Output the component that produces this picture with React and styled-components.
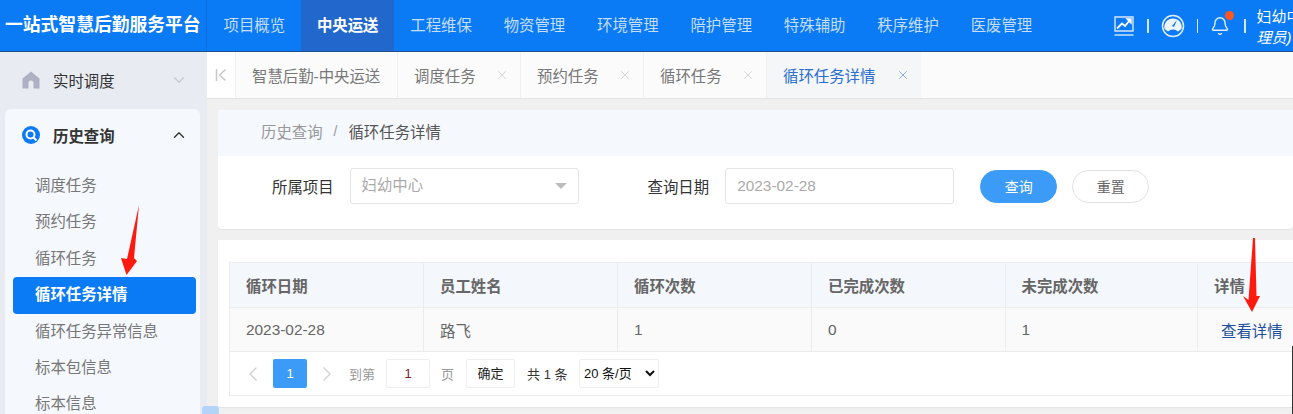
import React from 'react';
import styled, { createGlobalStyle } from 'styled-components';
import { Bell, ChevronDown, ChevronUp, ChevronLeft, ChevronRight, X } from 'lucide-react';

const GlobalStyle = createGlobalStyle`
	html, body {
		margin: 0;
		padding: 0;
		overflow: hidden;
	}
	* {
		box-sizing: border-box;
	}
	body {
		font-family: 'Liberation Sans', 'Noto Sans CJK SC', sans-serif;
	}
`;

const App = () => {
	const navArr = ['项目概览', '中央运送', '工程维保', '物资管理', '环境管理', '陪护管理', '特殊辅助', '秩序维护', '医废管理'];
	const subArr = ['调度任务', '预约任务', '循环任务', '循环任务详情', '循环任务异常信息', '标本包信息', '标本信息'];
	const tabArr = [
		{ name: '调度任务', width: 123 },
		{ name: '预约任务', width: 123 },
		{ name: '循环任务', width: 123 },
		{ name: '循环任务详情', width: 154, active: true },
	];
	const headArr = ['循环日期', '员工姓名', '循环次数', '已完成次数', '未完成次数', '详情'];
	const rowArr = ['2023-02-28', '路飞', '1', '0', '1'];

	return (
		<Page>
			<GlobalStyle />
			<Header>
				<Logo>一站式智慧后勤服务平台</Logo>
				<Nav>
					{navArr.map((el, idx) => (
						<NavItem key={idx} $active={el === '中央运送'}>{el}</NavItem>
					))}
				</Nav>
				<HeaderRight>
					<svg width="22" height="24" viewBox="0 0 22 24" fill="none" stroke="#d6e8ff" strokeWidth="1.4">
						<path d="M2 3v14h18V3z" />
						<path d="M1.5 21h19" />
						<path d="M4 14.5l5-5 3 2.5 5-6" stroke="#fff" strokeWidth="1.8" />
						<path d="M14 5h4v4z" fill="#fff" stroke="#fff" />
					</svg>
					<Divider />
					<svg width="24" height="24" viewBox="0 0 24 24">
						<circle cx="12" cy="12" r="10.5" fill="none" stroke="#e3efff" strokeWidth="1.5" />
						<path d="M3.5 15a8.8 8.8 0 0 1 0-4 8.800 8.800 0 0 1 17 0 8.800 8.800 0 0 1 0 4l-3.500 2.500a7 7 0 0 0-10 0z" fill="#eef5ff" />
						<path d="M11 12l5-6-3 7z" fill="#0a7af5" />
					</svg>
					<Divider />
					<BellWrap>
						<Bell size={20} color="#e3efff" strokeWidth={1.7} />
						<BellDot />
					</BellWrap>
					<Divider />
					<UserName>
						<span>妇幼中心</span>
						<em>理员)</em>
					</UserName>
				</HeaderRight>
			</Header>
			<Body>
				<Sidebar>
					<MenuRow $height={56}>
						<svg width="20" height="20" viewBox="0 0 20 20">
							<path d="M10 1.500L1.500 8.500V18.500H7.500V13a2.500 2.500 0 0 1 5 0v5.500h6V8.500z" fill="#aeb1c2" />
						</svg>
						<MenuTitle>实时调度</MenuTitle>
						<ChevronDown size={18} color="#c5c8d4" strokeWidth={1.5} />
					</MenuRow>
					<MenuCard>
						<MenuRow $height={52}>
							<svg width="20" height="20" viewBox="0 0 20 20">
								<circle cx="10" cy="10" r="9" fill="#0a7af5" />
								<circle cx="9.500" cy="9.500" r="4" fill="none" stroke="#fff" strokeWidth="2" />
								<path d="M12.500 12.500l3 3" stroke="#fff" strokeWidth="2" />
							</svg>
							<MenuTitle $bold>历史查询</MenuTitle>
							<ChevronUp size={18} color="#333" strokeWidth={1.8} />
						</MenuRow>
						<SubList>
							{subArr.map((el, idx) => (
								<SubItem key={idx} $active={el === '循环任务详情'}>{el}</SubItem>
							))}
						</SubList>
					</MenuCard>
				</Sidebar>
				<Main>
					<TabBar>
						<TabToggle>
							<svg width="12" height="14" viewBox="0 0 12 14" fill="none" stroke="#c8c8c8" strokeWidth="1.500">
								<path d="M1.500 1v12M10.500 1.500L4.500 7l6 5.500" />
							</svg>
						</TabToggle>
						<Tab $width={162}>智慧后勤-中央运送</Tab>
						{tabArr.map((el, idx) => (
							<Tab key={idx} $width={el.width} $active={el.active}>
								{el.name}
								<X size={14} strokeWidth={1.2} />
							</Tab>
						))}
					</TabBar>
					<Content>
						<Breadcrumb>
							<span>历史查询</span>
							<Slash>/</Slash>
							<strong>循环任务详情</strong>
						</Breadcrumb>
						<FilterPanel>
							<FilterLabel>所属项目</FilterLabel>
							<FilterBox>
								妇幼中心
								<Caret />
							</FilterBox>
							<FilterLabel $gap={69}>查询日期</FilterLabel>
							<FilterBox>2023-02-28</FilterBox>
							<PillButton $primary>查询</PillButton>
							<PillButton>重置</PillButton>
						</FilterPanel>
						<TableCard>
							<TableWrap>
								<TableRow $head>
									{headArr.map((el, idx) => (
										<Cell key={idx}>{el}</Cell>
									))}
								</TableRow>
								<TableRow>
									{rowArr.map((el, idx) => (
										<Cell key={idx}>{el}</Cell>
									))}
									<Cell $center><DetailLink>查看详情</DetailLink></Cell>
								</TableRow>
								<Pager>
									<PagerArrow><ChevronLeft size={24} strokeWidth={1.3} /></PagerArrow>
									<PageNum>1</PageNum>
									<PagerArrow><ChevronRight size={24} strokeWidth={1.3} /></PagerArrow>
									<PagerText $left={2} $right={11}>到第</PagerText>
									<PageInput>1</PageInput>
									<PagerText $left={11} $right={12}>页</PagerText>
									<ConfirmButton>确定</ConfirmButton>
									<PagerTotal>共 1 条</PagerTotal>
									<PageSelect defaultValue="20">
										<option value="20">20 条/页</option>
									</PageSelect>
								</Pager>
							</TableWrap>
						</TableCard>
					</Content>
				</Main>
			</Body>
			<Arrow $left={116} $top={203} width="28" height="74" viewBox="0 0 28 74">
				<path d="M23 2L18 55 21 58 10.500 72 5 55 11 56z" fill="#ff1a10" />
			</Arrow>
			<Arrow $left={1240} $top={236} width="24" height="78" viewBox="0 0 24 78">
				<path d="M13 2h2L16.500 60 20 60 12 76 3 60 8.500 64z" fill="#ff1a10" />
			</Arrow>
			<ScrollThumb />
			<EdgeLine />
		</Page>
	);
};

export default App;

const Page = styled.div`
	position: relative;
	width: 1293px;
	height: 414px;
	overflow: hidden;
	background: #f0f0f0;
`;
const Header = styled.header`
	height: 52px;
	display: flex;
	align-items: stretch;
	background: #0a7af5;
	border-bottom: 1px solid #1d4f8c;
	color: #fff;
`;
const Logo = styled.div`
	width: 207px;
	flex-shrink: 0;
	padding-left: 5px;
	line-height: 51px;
	font-size: 17.8px;
	font-weight: 700;
	white-space: nowrap;
	border-right: 1px solid #0a6fe0;
`;
const Nav = styled.nav`
	display: flex;
	margin-left: 0.6px;
`;
const NavItem = styled.div`
	width: 93.4px;
	text-align: center;
	line-height: 51px;
	font-size: 15.4px;
	white-space: nowrap;
	color: ${(p) => (p.$active ? '#fff' : '#c4defc')};
	font-weight: ${(p) => (p.$active ? 700 : 400)};
	background: ${(p) => (p.$active ? '#2268cc' : 'transparent')};
`;
const HeaderRight = styled.div`
	position: absolute;
	left: 1113px;
	top: 0;
	height: 51px;
	display: flex;
	align-items: center;
	gap: 12px;
`;
const Divider = styled.i`
	width: 1.5px;
	height: 14px;
	background: #d6e8ff;
`;
const BellWrap = styled.div`
	position: relative;
	width: 20px;
	height: 20px;
	margin-right: 2px;
`;
const BellDot = styled.i`
	position: absolute;
	top: -5px;
	right: -4px;
	width: 9px;
	height: 9px;
	border-radius: 50%;
	background: #ff5722;
`;
const UserName = styled.div`
	width: 60px;
	margin-left: -1px;
	padding-top: 2px;
	font-size: 15px;
	line-height: 21px;
	white-space: nowrap;
	span, em {
		display: block;
	}
`;
const Body = styled.div`
	display: flex;
	height: 362px;
`;
const Sidebar = styled.aside`
	width: 207px;
	flex-shrink: 0;
	padding: 0 7px 0 5px;
	background: #e9ebf3;
	overflow: hidden;
`;
const MenuRow = styled.div`
	height: ${(p) => p.$height}px;
	display: flex;
	align-items: center;
	padding: 0 12px 0 16px;
	gap: 12px;
`;
const MenuTitle = styled.div`
	flex: 1;
	font-size: 15.4px;
	color: #333;
	font-weight: ${(p) => (p.$bold ? 700 : 400)};
`;
const MenuCard = styled.div`
	margin-top: 1px;
	background: #f5f8fc;
	border-radius: 6px;
	height: 320px;
`;
const SubList = styled.ul`
	list-style: none;
	margin: 7px 0 0;
	padding: 0 4px 0 8px;
`;
const SubItem = styled.li`
	height: 36.4px;
	line-height: 36px;
	padding-left: 22px;
	font-size: 15.4px;
	border-radius: 4px;
	white-space: nowrap;
	color: ${(p) => (p.$active ? '#fff' : '#777')};
	font-weight: ${(p) => (p.$active ? 700 : 400)};
	background: ${(p) => (p.$active ? '#0a7af5' : 'transparent')};
`;
const Main = styled.main`
	flex: 1;
	min-width: 0;
	overflow: hidden;
`;
const TabBar = styled.div`
	height: 47px;
	display: flex;
	background: #fbfbfb;
	border-bottom: 1px solid #e4e4e4;
`;
const TabToggle = styled.div`
	width: 29px;
	display: flex;
	align-items: center;
	justify-content: center;
	background: #fff;
	border-right: 1px solid #f0f0f0;
`;
const Tab = styled.div`
	width: ${(p) => p.$width}px;
	flex-shrink: 0;
	display: flex;
	align-items: center;
	justify-content: space-between;
	padding: 0 11px 0 16px;
	font-size: 15.4px;
	white-space: nowrap;
	color: ${(p) => (p.$active ? '#2b6fd0' : '#777')};
	background: ${(p) => (p.$active ? '#f4f6f8' : 'transparent')};
	border-right: ${(p) => (p.$active ? 'none' : '1px solid #f0f0f0')};
	svg {
		color: ${(p) => (p.$active ? '#5a8fdc' : '#c4c4c4')};
	}
`;
const Content = styled.div`
	padding: 11px 0 0 11px;
`;
const Breadcrumb = styled.div`
	height: 46px;
	display: flex;
	align-items: center;
	padding: 0 0 4px 43px;
	font-size: 15.4px;
	color: #999;
	background: #f5f8fc;
	strong {
		font-weight: 400;
		color: #555;
	}
`;
const Slash = styled.span`
	margin: 0 11px;
	font-size: 14px;
`;
const FilterPanel = styled.div`
	height: 73px;
	display: flex;
	align-items: center;
	padding: 0 0 13px 54px;
	background: #fff;
	border-radius: 0 0 4px 4px;
	box-shadow: 0 1px 1px #e4e4e4;
`;
const FilterLabel = styled.div`
	margin: 0 16px 0 ${(p) => p.$gap || 0}px;
	font-size: 15.4px;
	color: #333;
	white-space: nowrap;
`;
const FilterBox = styled.div`
	position: relative;
	width: 229px;
	height: 36px;
	line-height: 34px;
	padding-left: 11px;
	font-size: 15.4px;
	color: #aaa;
	border: 1px solid #e4e4e4;
	border-radius: 3px;
`;
const Caret = styled.i`
	position: absolute;
	top: 14px;
	right: 11px;
	border-left: 6px solid transparent;
	border-right: 6px solid transparent;
	border-top: 6px solid #bdbdbd;
`;
const PillButton = styled.button`
	width: 77px;
	height: 33px;
	margin-left: ${(p) => (p.$primary ? 26 : 15)}px;
	padding: 0;
	font-family: inherit;
	font-size: 14px;
	border-radius: 17px;
	color: ${(p) => (p.$primary ? '#fff' : '#666')};
	background: ${(p) => (p.$primary ? '#3d9bf8' : '#fff')};
	border: 1px solid ${(p) => (p.$primary ? '#3d9bf8' : '#e0e0e0')};
`;
const TableCard = styled.section`
	height: 167px;
	margin-top: 11px;
	padding: 22px 0 0 11px;
	background: #fff;
	box-shadow: 0 1px 1px #e4e4e4;
`;
const TableWrap = styled.div`
	width: 1100px;
	border-top: 1px solid #ececec;
	border-left: 1px solid #ececec;
	border-bottom: 1px solid #ececec;
`;
const TableRow = styled.div`
	display: grid;
	grid-template-columns: 194px 194px 194px 193.5px 192.5px 132px;
	height: ${(p) => (p.$head ? 45 : 44)}px;
	font-size: 15.4px;
	color: #666;
	font-weight: ${(p) => (p.$head ? 700 : 400)};
	background: ${(p) => (p.$head ? '#f4f7fb' : '#fafafa')};
	border-bottom: 1px solid #ececec;
`;
const Cell = styled.div`
	display: flex;
	align-items: center;
	padding-left: ${(p) => (p.$center ? 23 : 16)}px;
	border-right: 1px solid #ececec;
	white-space: nowrap;
`;
const DetailLink = styled.span`
	color: #1f4f9c;
`;
const Pager = styled.div`
	height: 43px;
	display: flex;
	align-items: center;
	padding-left: 3px;
	font-size: 13px;
	color: #999;
`;
const PagerArrow = styled.div`
	width: 33px;
	margin: 0 3.5px;
	display: flex;
	justify-content: center;
	color: #cfcfcf;
`;
const PageNum = styled.div`
	width: 34px;
	height: 29px;
	line-height: 29px;
	text-align: center;
	color: #fff;
	background: #3d9bf8;
	border-radius: 2px;
`;
const PagerText = styled.div`
	margin: 0 ${(p) => p.$right}px 0 ${(p) => p.$left}px;
	white-space: nowrap;
`;
const PageInput = styled.div`
	width: 44px;
	height: 29px;
	line-height: 27px;
	text-align: center;
	color: #7a2020;
	border: 1px solid #eee;
	border-radius: 2px;
`;
const ConfirmButton = styled.div`
	width: 49px;
	height: 29px;
	line-height: 27px;
	text-align: center;
	color: #222;
	border: 1px solid #eee;
	border-radius: 2px;
`;
const PagerTotal = styled.div`
	width: 52px;
	margin-left: 12px;
	color: #333;
	white-space: nowrap;
`;
const PageSelect = styled.select`
	width: 80px;
	height: 29px;
	font-family: inherit;
	font-size: 13px;
	color: #111;
	background: #fff;
	border: 1px solid #eee;
	border-radius: 2px;
`;
const Arrow = styled.svg`
	position: absolute;
	left: ${(p) => p.$left}px;
	top: ${(p) => p.$top}px;
`;
const ScrollThumb = styled.i`
	position: absolute;
	left: 202px;
	top: 406px;
	width: 17px;
	height: 8px;
	border-radius: 3px 3px 0 0;
	background: #b3d4f8;
`;
const EdgeLine = styled.i`
	position: absolute;
	left: 1292px;
	top: 346px;
	width: 1px;
	height: 68px;
	background: #333;
`;
